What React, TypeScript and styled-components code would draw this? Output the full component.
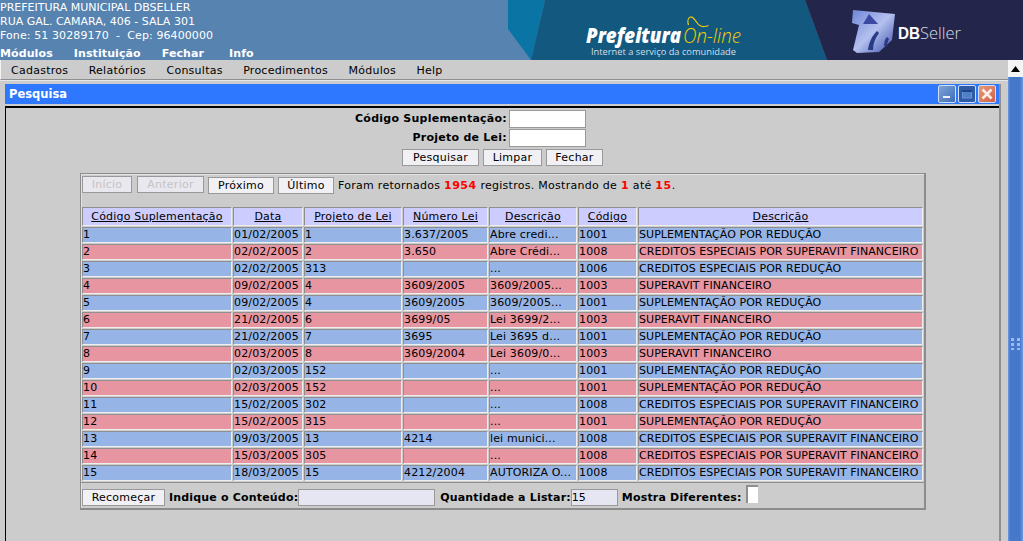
import { createGlobalStyle } from 'styled-components';
import styled from 'styled-components';

const GlobalStyle = createGlobalStyle`
  html, body { margin: 0; padding: 0; height: 100%; overflow: hidden; background: #cccccc; }
  body { font-family: "DejaVu Sans", sans-serif; font-size: 11px; color: #000; }
`;

const Page = styled.div`
  width: 1023px;
  height: 541px;
  overflow: hidden;
  display: flex;
  flex-direction: column;
`;

// --- banner ---
const Banner = styled.header`
  height: 60px;
  flex: none;
  background: #5783b1;
  display: flex;
  justify-content: space-between;
  color: #fff;
`;

const BannerInfo = styled.div`
  display: flex;
  flex-direction: column;
  padding-top: 1px;
  line-height: 14px;
`;

const PhoneLine = styled.span`
  letter-spacing: 0.1px;
`;

const TopNav = styled.nav`
  display: flex;
  gap: 21px;
  font-weight: bold;
  line-height: 14px;
  margin-top: 4px;
  letter-spacing: 0.1px;
  span:last-child { margin-left: 4px; }
`;

const BannerArt = styled.svg`
  display: block;
  width: 523px;
  height: 60px;
  flex: none;
`;

// --- body ---
const Body = styled.div`
  flex: 1;
  min-height: 0;
  display: flex;
`;

const Main = styled.main`
  flex: 1;
  min-width: 0;
  display: flex;
  flex-direction: column;
`;

const MenuBar = styled.div`
  height: 20px;
  flex: none;
  display: flex;
  align-items: center;
  gap: 20.5px;
  padding: 2px 0 0 10px;
  background: #cccccc;
  border-left: 1px solid #f2f2f2;
  border-bottom: 1px solid #8f8f8f;
  box-sizing: border-box;
  box-shadow: 0 1px 0 #e8e8e8;
  letter-spacing: 0.25px;
`;

const Window = styled.section`
  flex: 1;
  min-height: 0;
  margin: 4px 7px 0 5px;
  border-right: 2px solid #8e8e8e;
  display: flex;
  flex-direction: column;
`;

const TitleBar = styled.div`
  height: 20px;
  flex: none;
  display: flex;
  align-items: center;
  justify-content: space-between;
  padding: 0 3px 0 4px;
  background: #2d78ff;
  color: #fff;
  font-weight: bold;
  font-size: 11.5px;
`;

const WindowButtons = styled.div`
  display: flex;
  gap: 2px;
`;

const WinButton = styled.div<{ $bg: string }>`
  width: 16px;
  height: 16px;
  border: 1px solid #cfdff8;
  border-radius: 2px;
  background: ${p => p.$bg};
  display: flex;
  align-items: center;
  justify-content: center;
`;

const WindowContent = styled.div`
  flex: 1;
  min-height: 0;
  margin-top: 2px;
  padding-top: 1px;
  border-top: 2px solid #000;
  border-left: 1px solid #000;
  background: #cccccc;
  display: flex;
  flex-direction: column;
`;

// --- search form ---
const FieldRow = styled.div`
  display: grid;
  grid-template-columns: 501px 77px;
  column-gap: 2px;
  align-items: center;
  height: 19px;
  font-weight: bold;
  letter-spacing: 0.25px;
  label { text-align: right; }
`;

const FieldInput = styled.input`
  box-sizing: border-box;
  width: 77px;
  height: 18px;
  margin: 0;
  padding: 0 1px;
  background: #fff;
  border: 1px solid #999;
  font: inherit;
`;

const FormActions = styled.div`
  display: flex;
  justify-content: center;
  gap: 4px;
  margin-top: 2px;
`;

const Btn = styled.button<{ $w: number; $off?: boolean; $drop?: boolean; $push?: number }>`
  box-sizing: border-box;
  width: ${p => p.$w}px;
  height: 17px;
  margin: ${p => (p.$drop ? 1 : 0)}px 0 0 ${p => p.$push || 0}px;
  padding: 0;
  background: ${p => (p.$off ? '#e8e8ee' : '#f0f0f5')};
  border: 1px solid #999;
  color: ${p => (p.$off ? '#c4c4c4' : '#000')};
  font: inherit;
  font-size: 11px;
  letter-spacing: 0.25px;
`;

// --- results panel ---
const Panel = styled.div`
  box-sizing: border-box;
  width: 846px;
  height: 337px;
  margin: 7px 0 0 74px;
  border: 1px solid #8c8c8c;
  border-right: 2px solid #8c8c8c;
  border-bottom: 2px solid #8c8c8c;
  box-shadow: inset 1px 1px 0 #e2e2e2;
  padding-top: 2px;
  display: flex;
  flex-direction: column;
`;

const Pager = styled.div`
  height: 30px;
  flex: none;
  padding-left: 1px;
  display: flex;
  align-items: flex-start;
  gap: 4px;
  white-space: nowrap;
`;

const PagerText = styled.span`
  line-height: 18px;
  margin-top: 1px;
  letter-spacing: 0.28px;
  b { color: #f00; letter-spacing: 0.5px; }
`;

const Grid = styled.table`
  border-collapse: separate;
  border-spacing: 1px;
  table-layout: fixed;
  width: 843px;
  flex: none;
`;

const HeadCell = styled.th<{ $w: number }>`
  width: ${p => p.$w}px;
  height: 19px;
  padding: 0;
  box-sizing: border-box;
  background: #ccccff;
  border-top: 1px solid #8f8f8f;
  border-left: 1px solid #8f8f8f;
  border-right: 1px solid #eee;
  border-bottom: 1px solid #eee;
  font-weight: normal;
  text-decoration: underline;
  letter-spacing: 0.2px;
  white-space: nowrap;
  overflow: hidden;
`;

const Row = styled.tr<{ $alt: boolean }>`
  background: ${p => (p.$alt ? '#e895a2' : '#96b5e6')};
`;

const Cell = styled.td`
  height: 16px;
  padding: 0;
  box-sizing: border-box;
  border-top: 1px solid #8f8f8f;
  border-left: 1px solid #8f8f8f;
  border-right: 1px solid #eee;
  border-bottom: 1px solid #eee;
  white-space: nowrap;
  overflow: hidden;
  line-height: 14px;
  letter-spacing: 0.15px;
  &:last-child { letter-spacing: 0.05px; }
`;

const Footer = styled.div`
  flex: none;
  padding: 6px 0 0 1px;
  border-top: 1px solid #8f8f8f;
  display: flex;
  align-items: flex-start;
  white-space: nowrap;
`;

const FootLabel = styled.span<{ $left: number }>`
  margin-left: ${p => p.$left}px;
  font-weight: bold;
  line-height: 17px;
  letter-spacing: 0.18px;
`;

const FootInput = styled.input<{ $w: number }>`
  box-sizing: border-box;
  width: ${p => p.$w}px;
  height: 17px;
  margin: 0;
  padding: 0;
  background: #e6e6f2;
  border: 1px solid #999;
  font: inherit;
`;

const CheckBox = styled.div`
  box-sizing: border-box;
  width: 12px;
  height: 18px;
  margin: -4px 0 0 4px;
  background: #fff;
  border-top: 2px solid #8f8f8f;
  border-left: 2px solid #8f8f8f;
`;

// --- scrollbar ---
const ScrollBar = styled.div`
  width: 15px;
  flex: none;
  display: flex;
  flex-direction: column;
  background: #3f72c4;
`;

const ScrollUp = styled.div`
  height: 17px;
  flex: none;
  background: #f4f4f4;
  display: flex;
  align-items: center;
  justify-content: center;
`;

const ScrollThumb = styled.div`
  flex: 1;
  background: linear-gradient(90deg, #6f9be6 0, #4678ca 2px, #4678ca 12px, #6f9be6 100%);
  display: flex;
  align-items: center;
  justify-content: center;
  padding-top: 70px;
`;

const columns = [
  { title: 'Código Suplementação', w: 150 },
  { title: 'Data', w: 70 },
  { title: 'Projeto de Lei', w: 98 },
  { title: 'Número Lei', w: 85 },
  { title: 'Descrição', w: 88 },
  { title: 'Código', w: 59 },
  { title: 'Descrição', w: 285 },
];

const SUP_RED = 'SUPLEMENTAÇÃO POR REDUÇÃO';
const CRED_SUP = 'CREDITOS ESPECIAIS POR SUPERAVIT FINANCEIRO';
const CRED_RED = 'CREDITOS ESPECIAIS POR REDUÇÃO';
const SUP_FIN = 'SUPERAVIT FINANCEIRO';

const rows = [
  ['1', '01/02/2005', '1', '3.637/2005', 'Abre credi...', '1001', SUP_RED],
  ['2', '02/02/2005', '2', '3.650', 'Abre Crédi...', '1008', CRED_SUP],
  ['3', '02/02/2005', '313', '', '...', '1006', CRED_RED],
  ['4', '09/02/2005', '4', '3609/2005', '3609/2005...', '1003', SUP_FIN],
  ['5', '09/02/2005', '4', '3609/2005', '3609/2005...', '1001', SUP_RED],
  ['6', '21/02/2005', '6', '3699/05', 'Lei 3699/2...', '1003', SUP_FIN],
  ['7', '21/02/2005', '7', '3695', 'Lei 3695 d...', '1001', SUP_RED],
  ['8', '02/03/2005', '8', '3609/2004', 'Lei 3609/0...', '1003', SUP_FIN],
  ['9', '02/03/2005', '152', '', '...', '1001', SUP_RED],
  ['10', '02/03/2005', '152', '', '...', '1001', SUP_RED],
  ['11', '15/02/2005', '302', '', '...', '1008', CRED_SUP],
  ['12', '15/02/2005', '315', '', '...', '1001', SUP_RED],
  ['13', '09/03/2005', '13', '4214', 'lei munici...', '1008', CRED_SUP],
  ['14', '15/03/2005', '305', '', '...', '1008', CRED_SUP],
  ['15', '18/03/2005', '15', '4212/2004', 'AUTORIZA O...', '1008', CRED_SUP],
];

const menus = ['Cadastros', 'Relatórios', 'Consultas', 'Procedimentos', 'Módulos', 'Help'];

const BannerLogos = () => (
  <BannerArt viewBox="500 0 523 60">
    <defs>
      <linearGradient id="cube" x1="0" y1="0" x2="1" y2="1">
        <stop offset="0" stopColor="#6f86d8" />
        <stop offset="0.5" stopColor="#b4c0ee" />
        <stop offset="0.8" stopColor="#6a7cc8" />
        <stop offset="1" stopColor="#2f3a70" />
      </linearGradient>
      <filter id="soft"><feGaussianBlur stdDeviation="0.6" /></filter>
    </defs>
    <polygon points="508,0 545,0 531,60 508,29" fill="#0a75a5" />
    <polygon points="545,0 805,0 827,60 531,60" fill="#13587f" />
    <polygon points="805,0 1023,0 1023,60 827,60" fill="#23264a" />
    <text x="586" y="43" fill="#fff" fontFamily="'Open Sans', sans-serif" fontWeight="800" fontStyle="italic" fontSize="21" textLength="95" lengthAdjust="spacingAndGlyphs">Prefeitura</text>
    <text x="683" y="43" fill="#f2cc00" fontFamily="'Open Sans', sans-serif" fontWeight="300" fontStyle="italic" fontSize="21" textLength="58" lengthAdjust="spacingAndGlyphs">On-line</text>
    <path d="M688.500 25c-1-3-1-7 2-8 3-.5 4 3 6 5 2 3 5 5 8 4.500 2 0 3-.5 4-1" fill="none" stroke="#f2cc00" strokeWidth="1.2" />
    <text x="591" y="55" fill="#d5dfe6" fontFamily="'Open Sans', sans-serif" fontSize="9.5" textLength="145" lengthAdjust="spacingAndGlyphs">Internet a serviço da comunidade</text>
    <g filter="url(#soft)">
      <path d="M853 10l42 4-3 26-13 12-22 1-4-3 6-25-7-2z" fill="url(#cube)" />
      <path d="M869 14l9 10-15 0z" fill="#3a4aa0" />
      <path d="M868 50c1-8 4-14 9-19l2 2c-4 5-6 11-6 17zM884 46c0-4 1-7 3-9l2 2c-1 2-2 5-2 7z" fill="#2c3a86" />
    </g>
    <text x="898" y="39" fill="#fff" fontFamily="'Liberation Sans', sans-serif" fontWeight="bold" fontSize="16" textLength="22" lengthAdjust="spacingAndGlyphs">DB</text>
    <text x="920" y="39" fill="#d8dae6" fontFamily="'Open Sans', sans-serif" fontWeight="300" fontSize="16" textLength="41" lengthAdjust="spacingAndGlyphs">Seller</text>
  </BannerArt>
);

export default function App() {
  return (
    <Page>
      <GlobalStyle />
      <Banner>
        <BannerInfo>
          <span>PREFEITURA MUNICIPAL DBSELLER</span>
          <span>RUA GAL. CAMARA, 406 - SALA 301</span>
          <PhoneLine>Fone: 51 30289170 &nbsp;-&nbsp; Cep: 96400000</PhoneLine>
          <TopNav>
            <span>Módulos</span>
            <span>Instituição</span>
            <span>Fechar</span>
            <span>Info</span>
          </TopNav>
        </BannerInfo>
        <BannerLogos />
      </Banner>
      <Body>
        <Main>
          <MenuBar>
            {menus.map(m => <span key={m}>{m}</span>)}
          </MenuBar>
          <Window>
            <TitleBar>
              <span>Pesquisa</span>
              <WindowButtons>
                <WinButton $bg="linear-gradient(135deg,#7fa3d8,#3f6db5)">
                  <svg width="10" height="10" viewBox="0 0 10 10"><rect x="1" y="7" width="7" height="2" fill="#e8f0fb" /></svg>
                </WinButton>
                <WinButton $bg="#2f5ba6">
                  <svg width="12" height="12" viewBox="0 0 12 12"><rect x="1.5" y="2.5" width="9" height="7.5" fill="#4f7fc6" stroke="#6d94d0" /><rect x="1" y="2" width="10" height="2" fill="#1f4488" /></svg>
                </WinButton>
                <WinButton $bg="linear-gradient(135deg,#e99a7c,#cf5f45)">
                  <svg width="14" height="14" viewBox="0 0 14 14"><path d="M2.5 2.5l9 9M11.5 2.5l-9 9" stroke="#fbeee8" strokeWidth="2.6" /></svg>
                </WinButton>
              </WindowButtons>
            </TitleBar>
            <WindowContent>
              <FieldRow>
                <label>Código Suplementação:</label>
                <FieldInput />
              </FieldRow>
              <FieldRow>
                <label>Projeto de Lei:</label>
                <FieldInput />
              </FieldRow>
              <FormActions>
                <Btn $w={77}>Pesquisar</Btn>
                <Btn $w={59}>Limpar</Btn>
                <Btn $w={57}>Fechar</Btn>
              </FormActions>
              <Panel>
                <Pager>
                  <Btn $w={50} $off>Início</Btn>
                  <Btn $w={67} $off $push={1}>Anterior</Btn>
                  <Btn $w={66} $drop>Próximo</Btn>
                  <Btn $w={56} $drop>Último</Btn>
                  <PagerText>
                    Foram retornados <b>1954</b> registros. Mostrando de <b>1</b> até <b>15</b>.
                  </PagerText>
                </Pager>
                <Grid>
                  <thead>
                    <tr>
                      {columns.map((c, i) => <HeadCell key={i} $w={c.w}>{c.title}</HeadCell>)}
                    </tr>
                  </thead>
                  <tbody>
                    {rows.map((r, i) => (
                      <Row key={r[0]} $alt={i % 2 === 1}>
                        {r.map((v, j) => <Cell key={j}>{v}</Cell>)}
                      </Row>
                    ))}
                  </tbody>
                </Grid>
                <Footer>
                  <Btn $w={83}>Recomeçar</Btn>
                  <FootLabel $left={4}>Indique o Conteúdo:</FootLabel>
                  <FootInput $w={137} />
                  <FootLabel $left={5}>Quantidade a Listar:</FootLabel>
                  <FootInput $w={47} defaultValue="15" />
                  <FootLabel $left={4}>Mostra Diferentes:</FootLabel>
                  <CheckBox />
                </Footer>
              </Panel>
            </WindowContent>
          </Window>
        </Main>
        <ScrollBar>
          <ScrollUp>
            <svg width="9" height="6" viewBox="0 0 9 6"><path d="M4.5 0L9 6H0z" fill="#000" /></svg>
          </ScrollUp>
          <ScrollThumb>
            <svg width="10" height="12" viewBox="0 0 10 12" fill="#9db9ee">
              <rect x="0" y="0" width="3" height="3" /><rect x="6" y="0" width="3" height="3" />
              <rect x="0" y="5" width="3" height="3" /><rect x="6" y="5" width="3" height="3" />
              <rect x="0" y="10" width="3" height="2" /><rect x="6" y="10" width="3" height="2" />
            </svg>
          </ScrollThumb>
        </ScrollBar>
      </Body>
    </Page>
  );
}
